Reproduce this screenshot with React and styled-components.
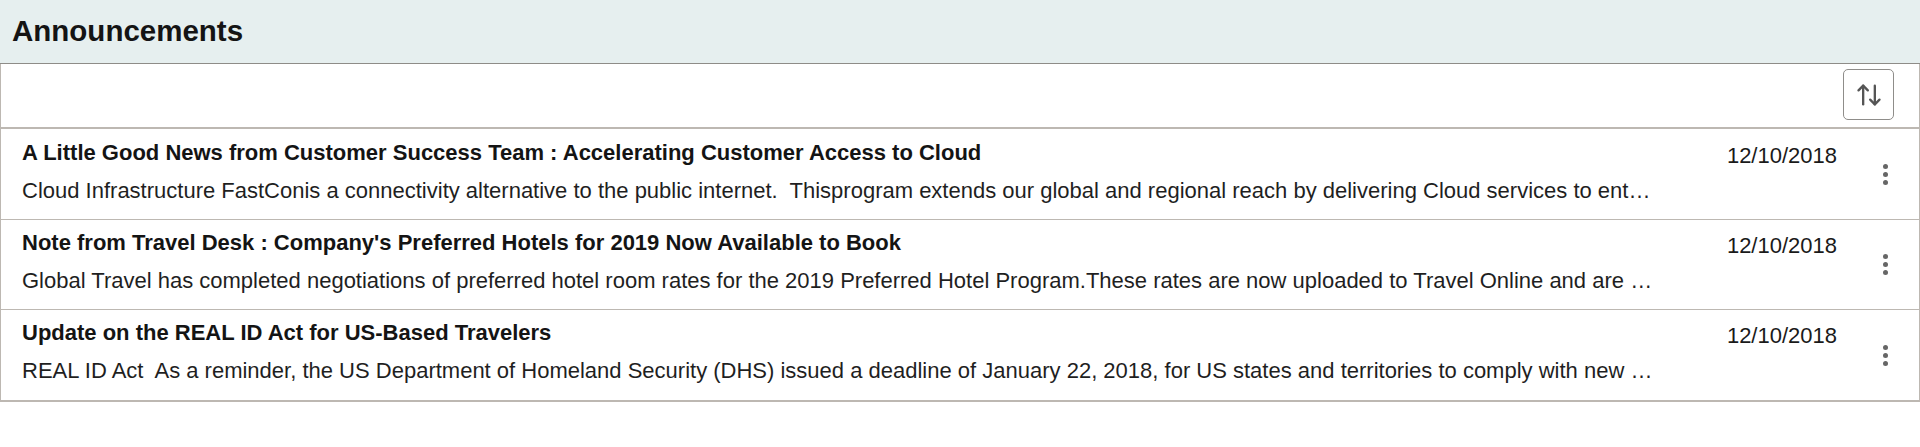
import React from "react";
import styled, { createGlobalStyle } from "styled-components";
import { ArrowUpDown } from "lucide-react";

const GlobalStyle = createGlobalStyle`
  html, body { margin: 0; padding: 0; background: #ffffff; }
  body { font-family: "Liberation Sans", Arial, sans-serif; color: #1a1a1a; }
  * { box-sizing: border-box; }
`;

const Page = styled.div`
  width: 1920px;
`;

const Header = styled.header`
  height: 64px;
  background: #e6efef;
  border-bottom: 1px solid #8e8c88;
  display: flex;
  align-items: center;
  padding-left: 12px;
`;

const Title = styled.h1`
  margin: 0;
  font-size: 29.5px;
  font-weight: 700;
  color: #141414;
  line-height: 1;
  padding-bottom: 2px;
`;

const Panel = styled.section`
  border: 1px solid #bdb8b2;
  border-top: none;
  border-bottom-width: 2px;
`;

const Toolbar = styled.div`
  height: 65px;
  display: flex;
  justify-content: flex-end;
  align-items: flex-start;
  padding: 5px 25px 0 0;
  border-bottom: 2px solid #bdb8b2;
`;

const SortButton = styled.button`
  width: 51px;
  height: 51px;
  border: 1px solid #8f8d8a;
  border-radius: 5px;
  background: #ffffff;
  color: #555555;
  display: flex;
  align-items: center;
  justify-content: center;
  padding: 0;
  cursor: pointer;
`;

const List = styled.ul`
  list-style: none;
  margin: 0;
  padding: 0;
`;

const Row = styled.li`
  display: grid;
  grid-template-columns: minmax(0, 1fr) auto 48px;
  align-items: center;
  padding: 0 10px 0 21px;
  border-bottom: 1px solid #bdb8b2;
  height: ${(p) => (p.$first ? 91 : 90)}px;
  &:last-child { border-bottom: none; height: 90px; }
`;

const Content = styled.div`
  min-width: 0;
  align-self: start;
  padding-top: ${(p) => (p.$first ? 11 : 10)}px;
`;

const ItemTitle = styled.div`
  font-size: 22px;
  font-weight: 700;
  line-height: 26px;
  color: #141414;
  white-space: nowrap;
  overflow: hidden;
  text-overflow: ellipsis;
`;

const ItemText = styled.div`
  margin-top: 12px;
  font-size: 22px;
  line-height: 26px;
  color: #1f1f1f;
  white-space: pre;
  overflow: hidden;
  text-overflow: ellipsis;
`;

const DateCell = styled.div`
  align-self: start;
  padding-top: ${(p) => (p.$first ? 14 : 13)}px;
  padding-left: 74px;
  margin-right: 24px;
  font-size: 22px;
  line-height: 26px;
  color: #1a1a1a;
  white-space: nowrap;
`;

const MoreButton = styled.button`
  width: 48px;
  height: 48px;
  border: none;
  background: transparent;
  padding: 0;
  display: flex;
  flex-direction: column;
  align-items: center;
  justify-content: center;
  gap: 3px;
  cursor: pointer;
`;

const Dot = styled.span`
  width: 5px;
  height: 5px;
  border-radius: 50%;
  background: #666666;
`;

const items = [
  {
    title:
      "A Little Good News from Customer Success Team : Accelerating Customer Access to Cloud",
    text:
      "Cloud Infrastructure FastConis a connectivity alternative to the public internet.  Thisprogram extends our global and regional reach by delivering Cloud services to enterprise customers with dedicated private connectivity and predictable performance.",
    date: "12/10/2018",
  },
  {
    title:
      "Note from Travel Desk : Company's Preferred Hotels for 2019 Now Available to Book",
    text:
      "Global Travel has completed negotiations of preferred hotel room rates for the 2019 Preferred Hotel Program.These rates are now uploaded to Travel Online and are available for booking.",
    date: "12/10/2018",
  },
  {
    title: "Update on the REAL ID Act for US-Based Travelers",
    text:
      "REAL ID Act  As a reminder, the US Department of Homeland Security (DHS) issued a deadline of January 22, 2018, for US states and territories to comply with new REAL ID requirements.",
    date: "12/10/2018",
  },
];

export default function App() {
  return (
    <Page>
      <GlobalStyle />
      <Header>
        <Title>Announcements</Title>
      </Header>
      <Panel>
        <Toolbar>
          <SortButton aria-label="Sort">
            <ArrowUpDown size={28} strokeWidth={2} />
          </SortButton>
        </Toolbar>
        <List>
          {items.map((it, i) => (
            <Row key={i} $first={i === 0}>
              <Content $first={i === 0}>
                <ItemTitle>{it.title}</ItemTitle>
                <ItemText>{it.text}</ItemText>
              </Content>
              <DateCell $first={i === 0}>{it.date}</DateCell>
              <MoreButton aria-label="More actions">
                <Dot />
                <Dot />
                <Dot />
              </MoreButton>
            </Row>
          ))}
        </List>
      </Panel>
    </Page>
  );
}
